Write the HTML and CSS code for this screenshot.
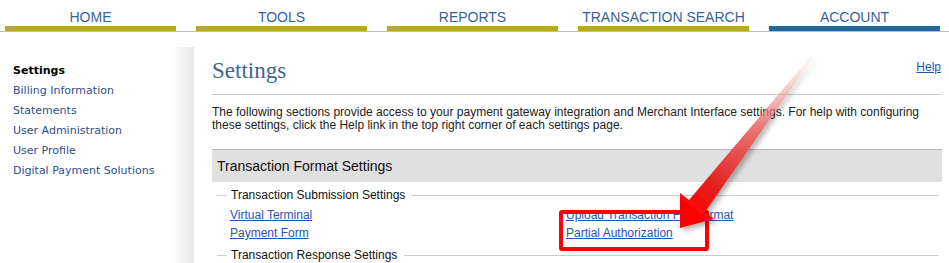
FILE: index.html
```html
<!DOCTYPE html>
<html>
    <head>
        <meta charset="utf-8">
        <title>Settings</title>
        <link rel="stylesheet" href="styles.css">
    </head>
    <body>
        <div class="nav">
            <div class="tab">HOME</div>
            <div class="tab">TOOLS</div>
            <div class="tab">REPORTS</div>
            <div class="tab">TRANSACTION SEARCH</div>
            <div class="tab active">ACCOUNT</div>
        </div>
        <div class="page">
            <div class="sidebar">
                <div class="side-item current">Settings</div>
                <div class="side-item">Billing Information</div>
                <div class="side-item">Statements</div>
                <div class="side-item">User Administration</div>
                <div class="side-item">User Profile</div>
                <div class="side-item">Digital Payment Solutions</div>
            </div>
            <div class="main">
                <div class="head">
                    <h1>Settings</h1>
                    <a class="help" href="#">Help</a>
                </div>
                <p class="intro">The following sections provide access to your payment gateway integration and Merchant Interface settings. For help with configuring these settings, click the Help link in the top right corner of each settings page.</p>
                <div class="band">Transaction Format Settings</div>
                <div class="legend">Transaction Submission Settings</div>
                <div class="links">
                    <a href="#">Virtual Terminal</a>
                    <a href="#">Upload Transaction File Format</a>
                    <a href="#">Payment Form</a>
                    <a href="#">Partial Authorization</a>
                </div>
                <div class="legend">Transaction Response Settings</div>
            </div>
        </div>

        <!-- 강조 표시 (빨간 상자 + 화살표) -->
        <div class="mark-box"></div>
        <svg class="mark-arrow" width="949" height="263" viewBox="0 0 949 263">
            <defs>
                <linearGradient id="arrowFill" gradientUnits="userSpaceOnUse" x1="812" y1="57" x2="690" y2="215">
                    <stop offset="0" stop-color="#f6c4c4" stop-opacity="0.15"/>
                    <stop offset="0.45" stop-color="#e86a6a" stop-opacity="0.9"/>
                    <stop offset="0.8" stop-color="#e42222"/>
                    <stop offset="1" stop-color="#ff0000"/>
                </linearGradient>
                <filter id="arrowShadow" x="-20%" y="-20%" width="140%" height="140%">
                    <feDropShadow dx="3" dy="3" stdDeviation="2.5" flood-color="#000" flood-opacity="0.3"/>
                </filter>
            </defs>
            <polygon points="813,58 705,212 714,219 680,228 680,193 689,200 811,56" fill="url(#arrowFill)" filter="url(#arrowShadow)"/>
        </svg>
    </body>
</html>
```

FILE: styles.css
```css
body {
    margin: 0;
    font-family: "Liberation Sans", Arial, sans-serif;
    color: #222;
    overflow: hidden;
}
a {
    color: #1f56b5;
}

/* 상단 메뉴 */
.nav {
    display: flex;
    gap: 20px;
    padding-left: 5px;
    border-bottom: 1px solid #bdbdbd;
}
.tab {
    width: 171px;
    padding: 9px 0 1px;
    text-align: center;
    font-size: 14px;
    line-height: 16px;
    color: #3a629a;
    border-bottom: 5px solid #b9a830;
}
.tab.active {
    border-bottom-color: #24679f;
}

.page {
    display: flex;
    height: 231px;
}

/* 왼쪽 메뉴 */
.sidebar {
    width: 194px;
    margin-top: 15px;
    padding-top: 14px;
    background: linear-gradient(to right, #fff 0, #fff 171px, #f3f3f3 184px, #e8e8e8 194px);
}
.side-item {
    padding-left: 13px;
    font-family: "DejaVu Sans", Verdana, sans-serif;
    font-size: 11px;
    line-height: 20px;
    color: #2f5086;
}
.side-item.current {
    font-weight: bold;
    color: #000;
}

/* 본문 */
.main {
    width: 730px;
    margin-left: 18px;
    padding-top: 25px;
}
.head {
    display: flex;
    justify-content: space-between;
    align-items: flex-start;
    padding-bottom: 9px;
    border-bottom: 1px solid #ccc;
}
.head h1 {
    margin: 0;
    font-family: "Liberation Serif", Georgia, serif;
    font-weight: normal;
    font-size: 23px;
    line-height: 28px;
    color: #3f6593;
}
.help {
    margin: 3px 1px 0 0;
    font-size: 12px;
    line-height: 14px;
}
.intro {
    margin: 11px 0 0;
    font-size: 12px;
    line-height: 13px;
}
.band {
    margin-top: 17px;
    padding-left: 5px;
    border-top: 1px solid #b4b4b4;
    background-color: #e0e0e0;
    font-size: 14px;
    line-height: 32px;
    color: #111;
}
.legend {
    display: flex;
    align-items: center;
    margin: 6px 3px 0 5px;
    font-size: 12px;
    line-height: 14px;
    color: #111;
}
.legend::before {
    content: "";
    width: 10px;
    margin-right: 4px;
    border-top: 1px solid #ccc;
}
.legend::after {
    content: "";
    flex: 1;
    margin-left: 7px;
    border-top: 1px solid #ccc;
}
.links {
    display: grid;
    grid-template-columns: 336px 1fr;
    margin-top: 4px;
    padding-left: 18px;
    font-size: 12px;
    line-height: 18px;
}
.links a {
    justify-self: start;
}

/* 강조 표시 */
.mark-box {
    position: absolute;
    left: 559px;
    top: 210px;
    width: 150px;
    height: 41px;
    box-sizing: border-box;
    border: 4px solid #f00;
    border-radius: 3px;
}
.mark-arrow {
    position: absolute;
    left: 0;
    top: 0;
    pointer-events: none;
}
```
